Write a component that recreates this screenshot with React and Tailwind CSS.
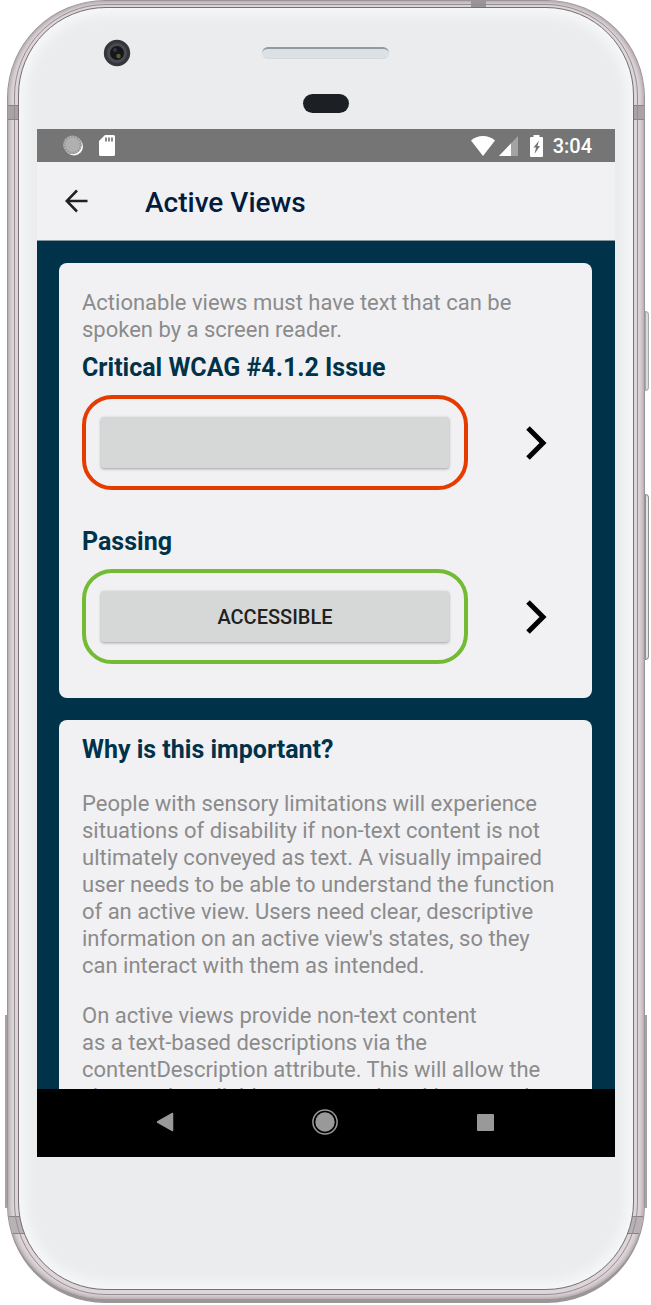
import React from "react";

function StatusBar() {
  return (
    <div className="flex h-[33px] shrink-0 items-center justify-between bg-[#757575] pl-[26px] pr-[23px] text-white">
      <div className="flex items-center gap-4">
        <svg width="20" height="21" viewBox="0 0 20 21" aria-hidden="true">
          <circle cx="11" cy="11.5" r="9" fill="#fff" />
          <circle cx="9.5" cy="9.8" r="9.4" fill="#b0b0b0" />
          <circle cx="9.5" cy="9.8" r="8" fill="none" stroke="#8c8c8c" strokeWidth="2" strokeDasharray="1 1.8" />
        </svg>
        <svg width="16" height="21" viewBox="0 0 16 21" aria-hidden="true">
          <path d="M6 0h8.5Q16 0 16 1.500V19.500Q16 21 14.500 21H1.500Q0 21 0 19.500V6Z" fill="#fff" />
          <path d="M7 2.500v4M10 2.500v4M13 2.500v4" stroke="#757575" strokeWidth="1.700" />
        </svg>
      </div>
      <div className="flex items-center">
        <svg className="mr-1" width="24" height="20" viewBox="0 0 24 20" aria-hidden="true">
          <path d="M0 4.500Q5 0 12 0T24 4.500L12 20Z" fill="#fff" />
        </svg>
        <svg className="mr-3" width="19" height="20" viewBox="0 0 19 20" aria-hidden="true">
          <path d="M19 0V20H0Z" fill="#a3a3a3" />
          <path d="M12 7.400V20H0Z" fill="#fff" />
        </svg>
        <svg className="mr-2.5" width="13" height="22" viewBox="0 0 13 22" aria-hidden="true">
          <path d="M3.500 0h6v2H12q1 0 1 1V21q0 1-1 1H1q-1 0-1-1V3Q0 2 1 2h2.500Z" fill="#fff" />
          <path d="M9 5.500 3.500 12.500h2.500L4.500 19 10 11H7.500Z" fill="#757575" />
        </svg>
        <span className="text-[20px] leading-6 font-medium">3:04</span>
      </div>
    </div>
  );
}

function Example({ title, tone, label, ariaLabel }) {
  return (
    <section>
      <h2 className="text-[25px] leading-[30px] font-bold text-[#00334a]">{title}</h2>
      <div className="mt-3 flex items-center">
        <div className={`h-[95px] w-[386px] min-w-0 rounded-[30px] border-4 px-[15px] py-[18px] ${tone}`}>
          <button
            type="button"
            aria-label={ariaLabel}
            className="block h-[51px] w-full rounded-[3px] bg-[#d6d8d7] text-[20px] leading-6 font-medium text-[#212121] shadow-[0_1px_3px_rgba(0,0,0,0.35)]"
          >
            {label}
          </button>
        </div>
        <button type="button" aria-label="Show details" className="ml-auto flex h-12 w-[66px] shrink-0 items-center justify-center">
          <svg width="22" height="34" viewBox="0 0 22 34" aria-hidden="true">
            <path d="M3 2 18 17 3 32" fill="none" stroke="#000" strokeWidth="5" />
          </svg>
        </button>
      </div>
    </section>
  );
}

function Screen() {
  return (
    <div className="flex h-[1028px] flex-col overflow-hidden bg-[#00334a]">
      <StatusBar />
      <header className="flex h-[79px] shrink-0 items-center border-b border-[#87979f] bg-[#f1f1f4] pl-7">
        <button type="button" aria-label="Back" className="flex h-6 w-6">
          <svg width="24" height="24" viewBox="0 0 24 24" fill="none" stroke="#212121" strokeWidth="2.500" aria-hidden="true">
            <path d="M22.500 12H2M12 1.500 1.700 12 12 22.500" />
          </svg>
        </button>
        <h1 className="mt-1 ml-14 text-[28px] leading-8 font-medium text-[#031b3d]">Active Views</h1>
      </header>
      <main className="min-h-0 grow overflow-hidden pt-[22px] pr-[23px] pl-[22px] text-[22px] text-[#8b8b8b]">
        <article className="rounded-lg bg-[#f1f1f4] px-[23px] pt-[26px] pb-[34px]">
          <p className="mb-2.5 leading-[27px]">
            Actionable views must have text that can be
            <br />
            spoken by a screen reader.
          </p>
          <Example title="Critical WCAG #4.1.2 Issue" tone="border-[#e63b00]" ariaLabel="Unlabeled example" />
          <div className="mt-[37px]">
            <Example title="Passing" tone="border-[#73bb34]" label="ACCESSIBLE" />
          </div>
        </article>
        <article className="mt-[22px] rounded-t-lg bg-[#f1f1f4] px-[23px] pt-[15px] pb-8 leading-[27px]">
          <h2 className="text-[25px] leading-[30px] font-bold text-[#00334a]">Why is this important?</h2>
          <p className="mt-[25px]">
            People with sensory limitations will experience
            <br />
            situations of disability if non-text content is not
            <br />
            ultimately conveyed as text. A visually impaired
            <br />
            user needs to be able to understand the function
            <br />
            of an active view. Users need clear, descriptive
            <br />
            information on an active view's states, so they
            <br />
            can interact with them as intended.
          </p>
          <p className="mt-[23px]">
            On active views provide non-text content
            <br />
            as a text-based descriptions via the
            <br />
            contentDescription attribute. This will allow the
            <br />
            views to be reliably announced, making sound
          </p>
        </article>
      </main>
      <nav className="flex h-[68px] shrink-0 items-center justify-center gap-[134px] bg-black pr-0.5 pb-0.5">
        <button type="button" aria-label="Back" className="flex h-7 w-[26px] items-center justify-center">
          <svg width="18" height="20" viewBox="0 0 18 20" aria-hidden="true">
            <path d="M16.500 1.500V18.500L1.500 10Z" fill="#999" stroke="#999" strokeWidth="1.500" strokeLinejoin="round" />
          </svg>
        </button>
        <button type="button" aria-label="Home" className="flex h-7 w-[26px] items-center justify-center">
          <svg width="26" height="26" viewBox="0 0 26 26" aria-hidden="true">
            <circle cx="13" cy="13" r="12.100" fill="none" stroke="#999" strokeWidth="1.500" />
            <circle cx="13" cy="13" r="9.700" fill="#999" />
          </svg>
        </button>
        <button type="button" aria-label="Overview" className="flex h-7 w-[26px] items-center justify-center">
          <span className="h-[17px] w-[17px] rounded-[1px] bg-[#999]" />
        </button>
      </nav>
    </div>
  );
}

export default function App() {
  return (
    <div className="min-h-screen bg-white pr-[6px] pb-[2px] pl-[7px] font-[Roboto,sans-serif]">
      <div className="relative">
        <span className="absolute top-[311px] -right-1 h-[80px] w-1 rounded-r-sm border border-[#a8a8a8] bg-[#d7dce0]" />
        <span className="absolute top-[494px] -right-1 h-[166px] w-1 rounded-r-sm border border-[#8e908e] bg-[#e2e5e1]" />
        <span className="absolute top-[1015px] -left-0.5 h-[193px] w-0.5 bg-[#a8a1a4]" />
        <span className="absolute top-[1015px] -right-0.5 h-[193px] w-0.5 bg-[#a8a1a4]" />
        <div className="relative overflow-hidden rounded-[98px] border border-b-4 border-[#9c9598] bg-[#ddd5d8] px-1.5 pt-[3px] pb-1 shadow-[inset_0_0_4px_1px_#a39b9f]">
          <span className="absolute top-[104px] left-0 h-[15px] w-3 border-y border-[#8b8487] bg-[#aaa3a6]" />
          <span className="absolute top-[104px] right-0 h-[15px] w-3 border-y border-[#8b8487] bg-[#aaa3a6]" />
          <span className="absolute bottom-[65px] left-0 h-[18px] w-5 border-y border-[#8b8487] bg-[#b9b2b5]" />
          <span className="absolute right-0 bottom-[65px] h-[18px] w-5 border-y border-[#8b8487] bg-[#b9b2b5]" />
          <span className="absolute top-0 right-[158px] h-2 w-[15px] bg-[#9b9497]" />
          <div className="relative rounded-[92px] border border-[#958e91] px-[3px] pt-0.5 pb-1">
            <div className="rounded-[88px] border border-[#776f73] bg-[#ebeced] px-[18px] pt-0 pb-[132px] shadow-[inset_0_0_12px_7px_#f6f7f9]">
              <div className="flex h-[121px] flex-col items-center">
                <div className="grid w-full grid-cols-3 items-start pt-[31px]">
                  <svg className="ml-[66px]" width="28" height="28" viewBox="0 0 28 28" aria-hidden="true">
                    <circle cx="14" cy="14" r="13.200" fill="#34363c" />
                    <circle cx="14" cy="14" r="10" fill="#494b53" />
                    <circle cx="14" cy="14" r="7" fill="#16171c" />
                    <circle cx="15.500" cy="17" r="2.200" fill="#5f5b27" />
                    <circle cx="12" cy="11" r="2" fill="#35373f" />
                  </svg>
                  <span className="mt-2 h-3 w-[127px] justify-self-center rounded-full border-t-2 border-b border-t-[#9299a2] border-b-[#d5d9dd] bg-[#dce1e6]" />
                </div>
                <span className="mt-[27px] h-[19px] w-[46px] rounded-full bg-[#1c1f23]" />
              </div>
              <Screen />
            </div>
          </div>
        </div>
      </div>
    </div>
  );
}
